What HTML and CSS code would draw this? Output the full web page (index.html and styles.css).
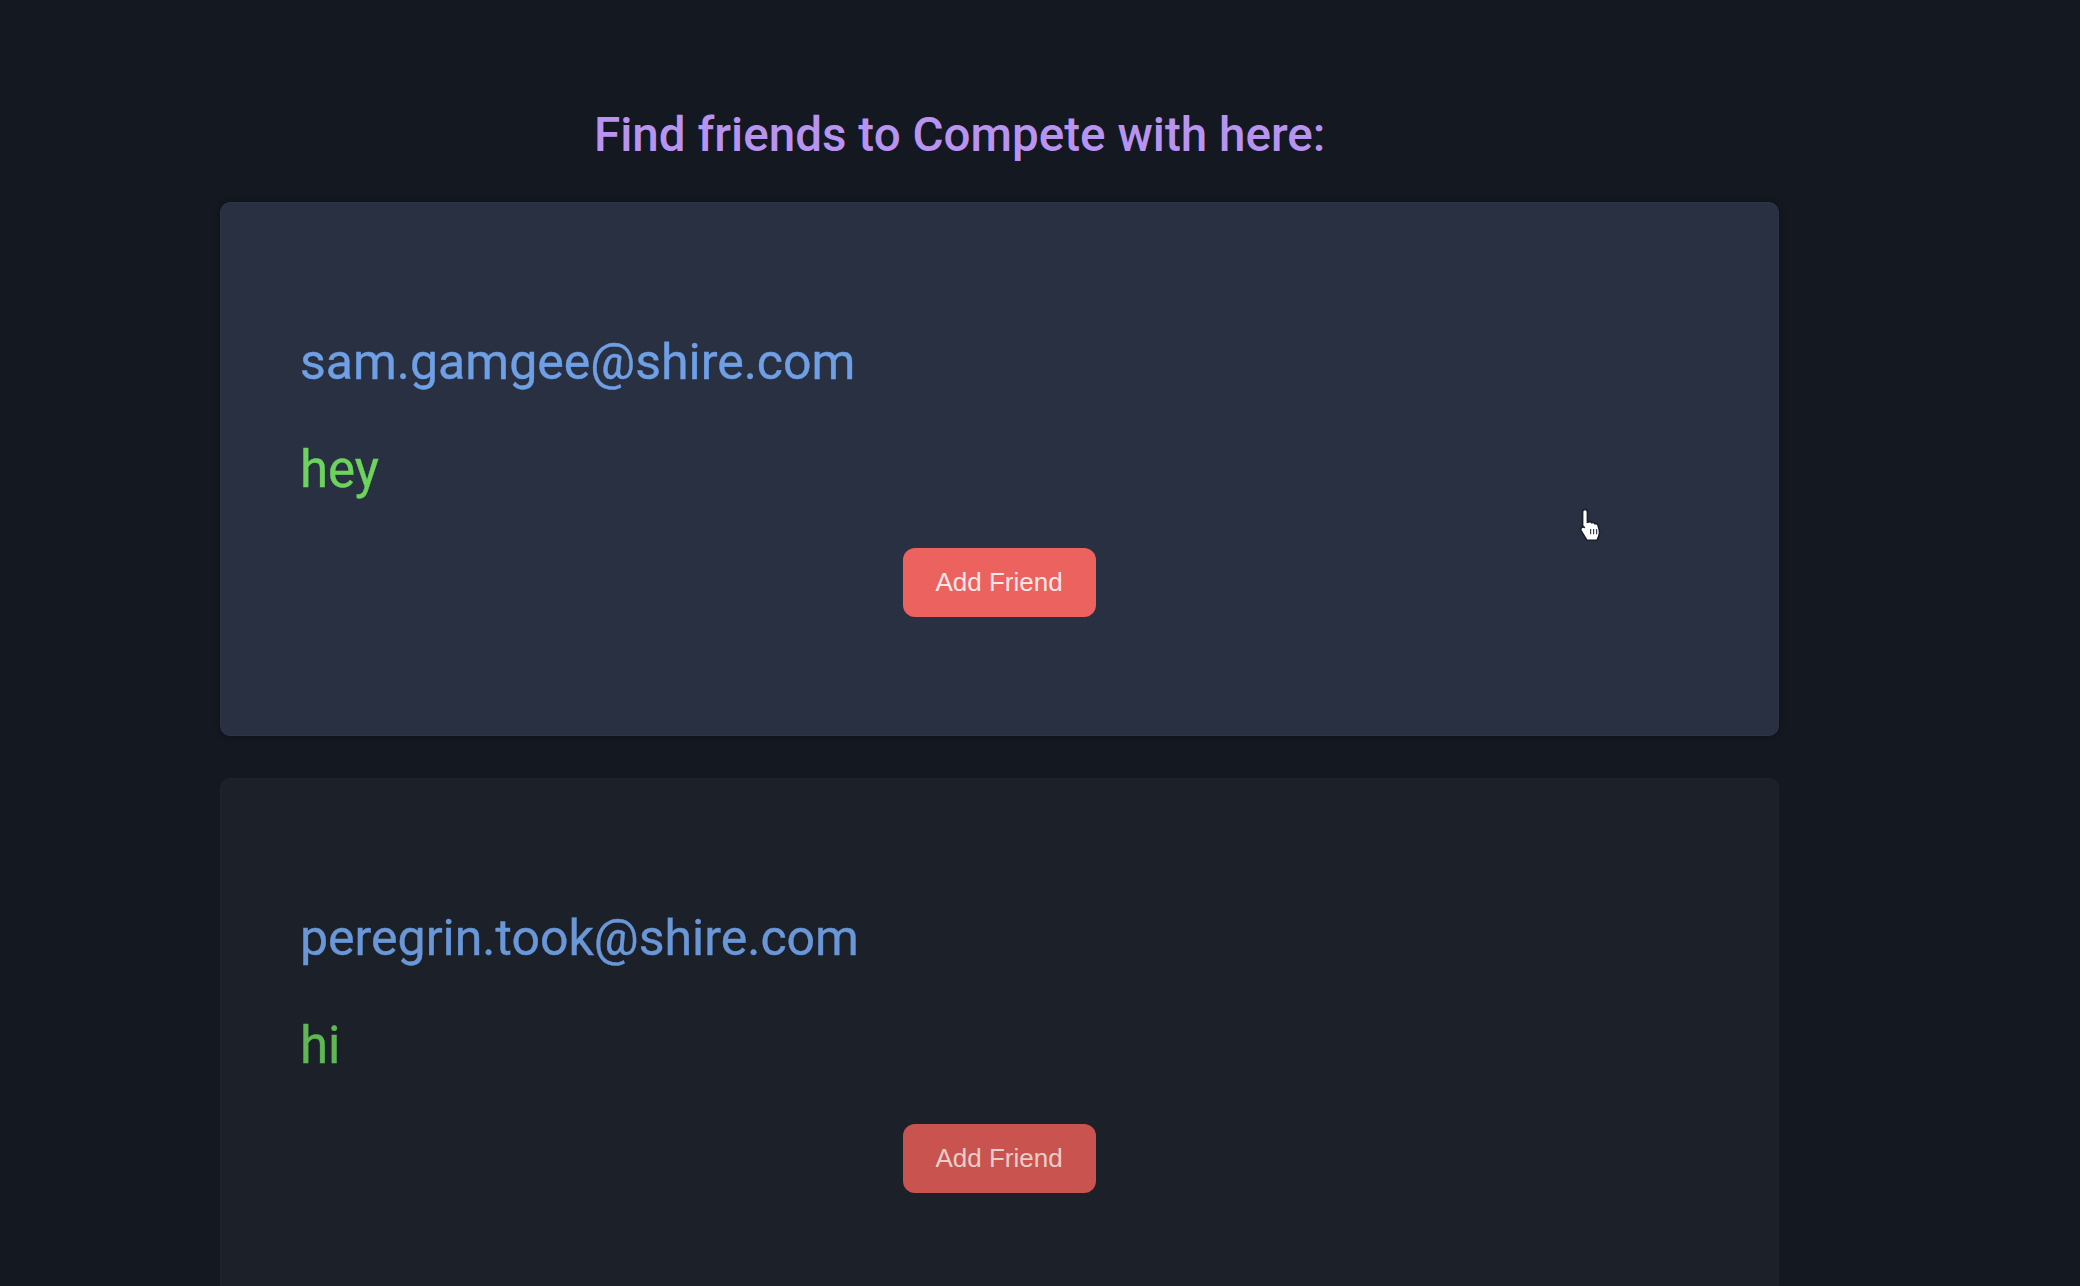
FILE: index.html
```html
<!DOCTYPE html>
<html>
<head>
<meta charset="utf-8">
<link rel="stylesheet" href="styles.css">
</head>
<body>
<main class="page">
  <h1 class="title">Find friends to Compete with here:</h1>
  <section class="card card-active">
    <p class="email">sam.gamgee@shire.com</p>
    <p class="msg">hey</p>
    <div class="actions"><button class="add-btn">Add Friend</button></div>
    <svg class="cursor" width="30" height="34" viewBox="0 0 15 17">
      <path d="M4.5 1.2c.7 0 1.2.5 1.2 1.2v5.2l.6-.1c.6-.3 1.3-.1 1.6.4.6-.3 1.3-.1 1.6.5.6-.2 1.3.1 1.5.7l.6 2.2c.3 1.2.2 2.4-.3 3.5l-.8 1.8H5.4L2.6 12c-.4-.6-.3-1.3.2-1.7.5-.4 1.2-.3 1.6.1l-1.1-1V2.4c0-.7.5-1.2 1.2-1.2z" fill="#ffffff" stroke="#1a1f2a" stroke-width="0.8"/>
      <path d="M7.3 11v2.6M8.8 11v2.6M10.3 11v2.6" stroke="#3a4150" stroke-width="0.6"/>
    </svg>
  </section>
  <section class="card card-dim">
    <p class="email">peregrin.took@shire.com</p>
    <p class="msg">hi</p>
    <div class="actions"><button class="add-btn">Add Friend</button></div>
  </section>
</main>
</body>
</html>
```
FILE: styles.css
```css
html, body {
  margin: 0;
  padding: 0;
  background: #141821;
  overflow: hidden;
  height: 1286px;
}
.page {
  margin-left: 220px;
  width: 1559px;
  padding-top: 107px;
  display: flex;
  flex-direction: column;
}
.title {
  margin: 0 0 39px 0;
  padding-left: 374px;
  font-family: Roboto, "Liberation Sans", sans-serif;
  font-weight: 500;
  font-size: 47.6px;
  line-height: 56px;
  color: #b894f0;
  white-space: nowrap;
}
.card {
  position: relative;
  box-sizing: border-box;
  border-radius: 10px;
  padding: 129px 80px 118px 79px;
  margin-bottom: 42px;
  display: flex;
  flex-direction: column;
}
.card-active {
  background: #283041;
  border: 1px solid #2d3442;
  box-shadow: 0 0 6px rgba(0,0,0,0.35);
}
.card-dim {
  background: #1c2029;
  border: 1px solid #1f232c;
}
.email {
  margin: 0 0 48px 0;
  font-family: Roboto, "Liberation Sans", sans-serif;
  font-size: 50px;
  line-height: 60px;
  color: #6f9fe4;
  -webkit-text-stroke: 0.4px #6f9fe4;
}
.msg {
  margin: 0 0 48px 0;
  font-family: Roboto, "Liberation Sans", sans-serif;
  font-size: 51px;
  line-height: 60px;
  color: #6dd35d;
  -webkit-text-stroke: 0.4px #6dd35d;
}
.card-dim .email { color: #6a97d8; -webkit-text-stroke-color: #6a97d8; }
.card-dim .msg { color: #5fb853; -webkit-text-stroke-color: #5fb853; }
.actions {
  display: flex;
  justify-content: center;
}
.add-btn {
  width: 193px;
  height: 69px;
  border: none;
  border-radius: 12px;
  background: #eb625e;
  color: #fce8e7;
  font-family: "Liberation Sans", Arial, sans-serif;
  font-size: 26px;
  padding: 0;
}
.card-dim .add-btn {
  background: #c9544f;
  color: #e9cdcb;
}
.cursor {
  position: absolute;
  left: 1355px;
  top: 304px;
}
```
